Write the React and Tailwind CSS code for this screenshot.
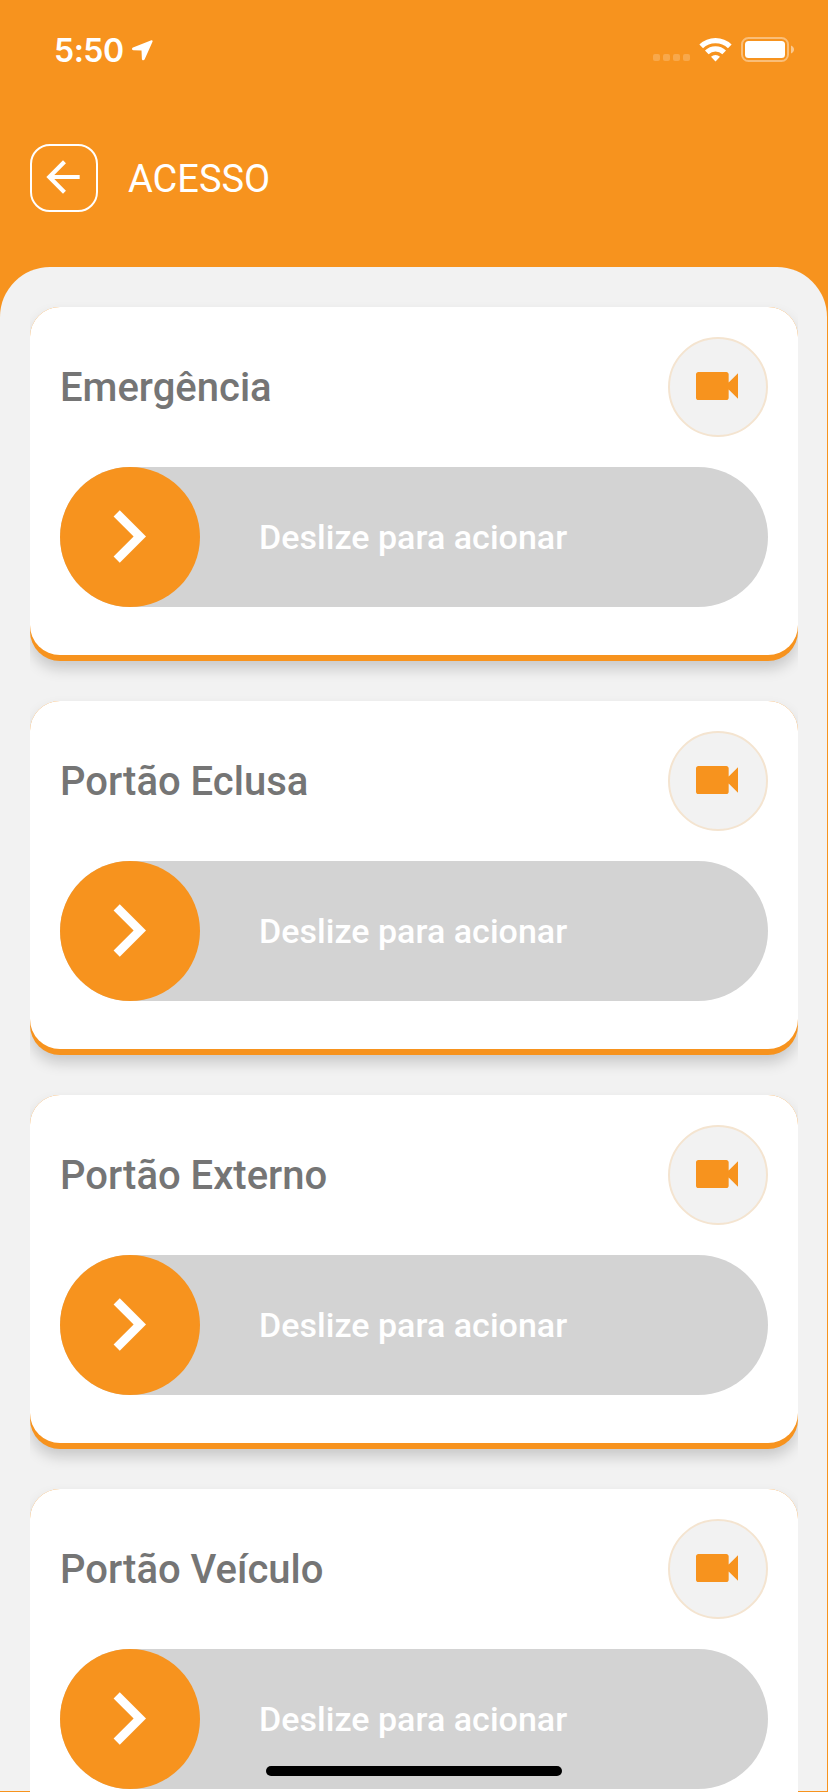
const gates = ["Emergência", "Portão Eclusa", "Portão Externo", "Portão Veículo"];

function StatusBar() {
  return (
    <div className="flex h-[100px] items-center pl-[54px] pr-[34px]">
      <span className="w-[78px] whitespace-nowrap pt-px font-['Inter'] text-[32px] leading-none font-semibold tracking-[-0.5px]">5:50</span>
      <svg className="h-[21px] w-[21px]" viewBox="0 0 21 21">
        <path d="M19.4.3 1 7.6C-.5 8.300-.2 10.100 1.300 10.200L9.500 10.500 9.900 18.900C10 20.500 12 20.700 12.700 19.300L20.500 1.800C20.900.7 20.300 0 19.400.3Z" fill="currentColor" />
      </svg>
      <div className="ml-auto flex h-[26px] items-start">
        <div className="mt-[17px] mr-[9px] flex gap-[3px]">
          {[0, 1, 2, 3].map((n) => (
            <span key={n} className="h-[7px] w-[7px] rounded-[2px] bg-white/20" />
          ))}
        </div>
        <svg className="mr-[9px] h-[25px] w-[33px]" viewBox="0 0 33 25">
          <g fill="none" stroke="currentColor" strokeWidth="5.200">
            <path d="M2.200 9.400a20.500 20.500 0 0 1 28.600 0" />
            <path d="M7.800 15.300a12.500 12.500 0 0 1 17.400 0" />
          </g>
          <path d="M16.500 24.400 12 19.700a6.600 6.600 0 0 1 9 0Z" fill="currentColor" />
        </svg>
        <svg className="h-[26px] w-[53px]" viewBox="0 0 53 26">
          <rect x="1" y="1" width="46" height="23" rx="6.500" fill="none" stroke="white" strokeOpacity=".4" strokeWidth="2" />
          <rect x="4" y="4" width="40" height="17" rx="3.500" fill="white" />
          <path d="M50 8.500c4 1.500 4 6.500 0 8Z" fill="white" fillOpacity=".5" />
        </svg>
      </div>
    </div>
  );
}

function Header() {
  return (
    <div className="flex h-[156px] items-center gap-[30px] px-[30px]">
      <button className="flex h-[68px] w-[68px] items-center justify-center rounded-[20px] border-2 border-white">
        <svg className="relative -top-px -left-px h-[50px] w-[50px] shrink-0" viewBox="0 0 24 24" fill="currentColor">
          <path d="M20 11H7.830l5.590-5.590L12 4l-8 8 8 8 1.410-1.410L7.830 13H20v-2z" />
        </svg>
      </button>
      <h1 className="pt-[2px] text-[38px] leading-none font-normal">ACESSO</h1>
    </div>
  );
}

function GateCard({ name }) {
  return (
    <section className="h-[354px] rounded-[30px] bg-[#f7931e] shadow-[0_8px_14px_rgba(0,0,0,0.17)]">
      <div className="h-[348px] rounded-[30px] bg-white px-[30px] pt-[30px]">
        <div className="flex h-[100px] items-center justify-between">
          <h2 className="pt-[2px] text-[40px] leading-none font-medium text-[#757575]">{name}</h2>
          <button className="flex h-[100px] w-[100px] items-center justify-center rounded-full border-2 border-[#f4e4d0] bg-[#f2f2f2]">
            <svg className="relative -top-px -left-px h-14 w-14 text-[#f7931e]" viewBox="0 0 24 24" fill="currentColor">
              <path d="M17 10.500V7c0-.55-.45-1-1-1H4c-.55 0-1 .45-1 1v10c0 .55.45 1 1 1h12c.55 0 1-.45 1-1v-3.500l4 4v-11l-4 4z" />
            </svg>
          </button>
        </div>
        <div className="mt-[30px] flex h-[140px] items-center rounded-full bg-[#d3d3d3]">
          <button className="flex h-[140px] w-[140px] items-center justify-center rounded-full bg-[#f7931e] text-white">
            <svg className="relative -top-px -left-[1.5px] h-[105px] w-[105px]" viewBox="0 0 24 24" fill="currentColor">
              <path d="M10 6L8.590 7.410 13.170 12l-4.580 4.590L10 18l6-6z" />
            </svg>
          </button>
          <span className="ml-[59px] text-[34px] leading-none font-medium tracking-[0.03px] text-white">Deslize para acionar</span>
        </div>
      </div>
    </section>
  );
}

export default function App() {
  return (
    <div className="relative flex h-[1792px] w-[828px] flex-col overflow-hidden bg-[#f7931e] font-['Roboto',sans-serif] text-white">
      <StatusBar />
      <Header />
      <main className="mt-[11px] h-[1524px] w-[827px] rounded-t-[50px] bg-[#f2f2f2] px-[30px] pt-[40px]">
        <div className="flex w-[768px] flex-col gap-[40px] overflow-x-clip">
          {gates.map((name) => (
            <GateCard key={name} name={name} />
          ))}
        </div>
      </main>
      <div className="absolute top-[1766px] left-[266px] h-[10px] w-[296px] rounded-full bg-black" />
    </div>
  );
}
